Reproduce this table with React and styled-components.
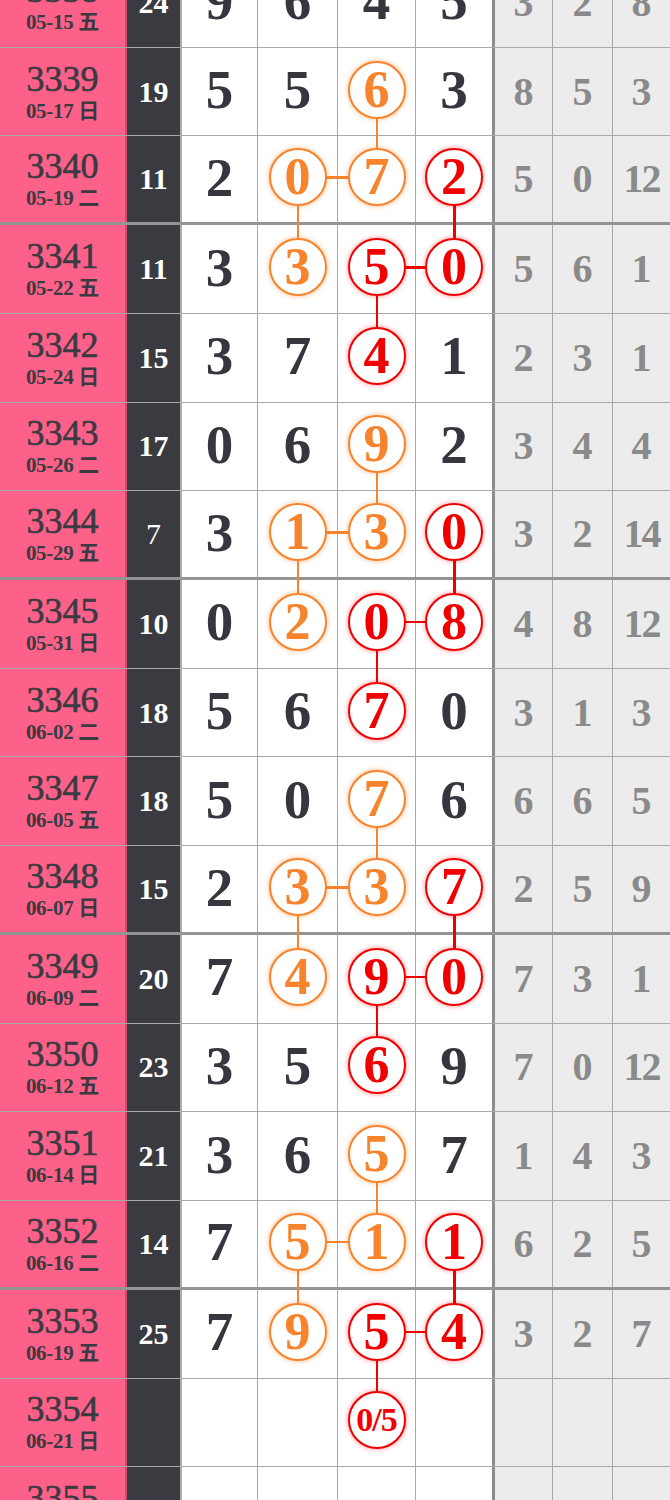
import React from 'react';
import styled, { createGlobalStyle } from 'styled-components';

const COLORS = {
  o: { line: '#f7842c', glow: 'rgba(247,132,44,0.4)' },
  r: { line: '#f00000', glow: 'rgba(240,0,0,0.32)' },
};

const Global = createGlobalStyle`
  html, body { margin: 0; padding: 0; background: #ffffff; overflow: hidden; }
  body { font-family: "Liberation Serif", "Noto Sans CJK SC", serif; }
`;

const Board = styled.div`
  width: 670px;
  margin-top: -41px;
`;

const Row = styled.div`
  display: grid;
  grid-template-columns: 127px 55px 76px 80px 78px 79px 58px 60px 57px;
  height: 88.73px;
  box-sizing: border-box;
  border-bottom: ${(p) => (p.$thick ? '3px solid rgba(0,0,0,0.42)' : '1px solid rgba(0,0,0,0.34)')};
`;

const IssueCell = styled.div`
  background: #fd6189;
  border-right: 2px solid rgba(0, 0, 0, 0.2);
  box-sizing: border-box;
  display: flex;
  flex-direction: column;
  align-items: center;
  justify-content: center;
  color: #3a3a41;
`;

const IssueNo = styled.div`
  font-size: 36px;
  line-height: 38px;
  font-weight: 400;
  -webkit-text-stroke: 0.6px currentColor;
`;

const IssueDate = styled.div`
  font-family: "Liberation Serif", "Noto Sans CJK SC", serif;
  font-size: 21px;
  line-height: 26px;
  font-weight: 700;
  letter-spacing: -0.3px;
  white-space: nowrap;
`;

const SumCell = styled.div`
  background: #3a3a41;
  border-right: 2px solid #adadad;
  box-sizing: border-box;
  color: #ffffff;
  font-size: 30px;
  font-weight: ${(p) => (p.$single ? 400 : 700)};
  display: flex;
  align-items: center;
  justify-content: center;
  line-height: 1;
`;

const DigitCell = styled.div`
  position: relative;
  background: #ffffff;
  box-sizing: border-box;
  border-right: ${(p) => (p.$last ? '3px solid rgba(0,0,0,0.45)' : '1px solid rgba(0,0,0,0.34)')};
  display: flex;
  align-items: center;
  justify-content: center;
`;

const Plain = styled.span`
  font-size: 55px;
  font-weight: 700;
  line-height: 1;
  color: #36363e;
  margin-bottom: 4px;
`;

const Ball = styled.div`
  position: relative;
  z-index: 1;
  width: 58px;
  height: 58px;
  box-sizing: border-box;
  border-radius: 50%;
  border: 2.5px solid ${(p) => COLORS[p.$c].line};
  background: #ffffff;
  color: ${(p) => COLORS[p.$c].line};
  box-shadow: 0 0 4px 1px ${(p) => COLORS[p.$c].glow};
  display: flex;
  align-items: center;
  justify-content: center;
  font-size: ${(p) => (p.$small ? '34px' : '52px')};
  letter-spacing: ${(p) => (p.$small ? '-1px' : '0')};
  font-weight: 700;
  line-height: 1;
  margin-bottom: 4px;
`;

const Link = styled.span`
  position: absolute;
  background: ${(p) => COLORS[p.$c].line};
  ${(p) =>
    p.$dir === 'up'
      ? 'left: calc(50% - 1px); width: 2.5px; top: 0; height: calc(50% - 2px);'
      : p.$dir === 'down'
      ? 'left: calc(50% - 1px); width: 2.5px; top: calc(50% - 2px); bottom: -3px;'
      : p.$dir === 'left'
      ? 'top: calc(50% - 3px); height: 2.5px; left: 0; width: 50%;'
      : 'top: calc(50% - 3px); height: 2.5px; left: 50%; right: -3px;'}
`;

const GrayCell = styled.div`
  background: #ececec;
  box-sizing: border-box;
  border-right: ${(p) => (p.$last ? 'none' : '1px solid rgba(0,0,0,0.3)')};
  display: flex;
  align-items: center;
  justify-content: center;
  color: #8a8a8a;
  font-size: 40px;
  font-weight: 700;
  line-height: 1;
  letter-spacing: ${(p) => (p.$wide ? '-2px' : '0')};
`;

const o = (v) => ({ v, c: 'o' });
const r = (v) => ({ v, c: 'r' });

const rows = [
  { no: '3338', date: '05-15 五', sum: 24, d: [9, 6, 4, 5], g: [3, 2, 8] },
  { no: '3339', date: '05-17 日', sum: 19, d: [5, 5, o(6), 3], g: [8, 5, 3] },
  { no: '3340', date: '05-19 二', sum: 11, d: [2, o(0), o(7), r(2)], g: [5, 0, 12] },
  { no: '3341', date: '05-22 五', sum: 11, d: [3, o(3), r(5), r(0)], g: [5, 6, 1] },
  { no: '3342', date: '05-24 日', sum: 15, d: [3, 7, r(4), 1], g: [2, 3, 1] },
  { no: '3343', date: '05-26 二', sum: 17, d: [0, 6, o(9), 2], g: [3, 4, 4] },
  { no: '3344', date: '05-29 五', sum: 7, d: [3, o(1), o(3), r(0)], g: [3, 2, 14] },
  { no: '3345', date: '05-31 日', sum: 10, d: [0, o(2), r(0), r(8)], g: [4, 8, 12] },
  { no: '3346', date: '06-02 二', sum: 18, d: [5, 6, r(7), 0], g: [3, 1, 3] },
  { no: '3347', date: '06-05 五', sum: 18, d: [5, 0, o(7), 6], g: [6, 6, 5] },
  { no: '3348', date: '06-07 日', sum: 15, d: [2, o(3), o(3), r(7)], g: [2, 5, 9] },
  { no: '3349', date: '06-09 二', sum: 20, d: [7, o(4), r(9), r(0)], g: [7, 3, 1] },
  { no: '3350', date: '06-12 五', sum: 23, d: [3, 5, r(6), 9], g: [7, 0, 12] },
  { no: '3351', date: '06-14 日', sum: 21, d: [3, 6, o(5), 7], g: [1, 4, 3] },
  { no: '3352', date: '06-16 二', sum: 14, d: [7, o(5), o(1), r(1)], g: [6, 2, 5] },
  { no: '3353', date: '06-19 五', sum: 25, d: [7, o(9), r(5), r(4)], g: [3, 2, 7] },
  { no: '3354', date: '06-21 日', sum: '', d: ['', '', r('0/5'), ''], g: ['', '', ''] },
  { no: '3355', date: '06-23 二', sum: '', d: ['', '', '', ''], g: ['', '', ''] },
];

const colorAt = (ri, ci) => {
  const row = rows[ri];
  if (!row) return null;
  const cell = row.d[ci];
  return cell && typeof cell === 'object' ? cell.c : null;
};

function Digit({ ri, ci }) {
  const cell = rows[ri].d[ci];
  if (cell && typeof cell === 'object') {
    const c = cell.c;
    const links = [];
    if (colorAt(ri - 1, ci) === c) links.push('up');
    if (colorAt(ri + 1, ci) === c) links.push('down');
    if (colorAt(ri, ci - 1) === c) links.push('left');
    if (colorAt(ri, ci + 1) === c) links.push('right');
    return (
      <DigitCell $last={ci === 3}>
        {links.map((dir) => (
          <Link key={dir} $dir={dir} $c={c} />
        ))}
        <Ball $c={c} $small={String(cell.v).length > 1}>
          {cell.v}
        </Ball>
      </DigitCell>
    );
  }
  return (
    <DigitCell $last={ci === 3}>
      <Plain>{cell}</Plain>
    </DigitCell>
  );
}

export default function App() {
  return (
    <>
      <Global />
      <Board>
        {rows.map((row, ri) => (
          <Row key={row.no} $thick={(Number(row.no) - 3336) % 4 === 0}>
            <IssueCell>
              <IssueNo>{row.no}</IssueNo>
              <IssueDate>{row.date}</IssueDate>
            </IssueCell>
            <SumCell $single={String(row.sum).length === 1}>{row.sum}</SumCell>
            {row.d.map((_, ci) => (
              <Digit key={ci} ri={ri} ci={ci} />
            ))}
            {row.g.map((v, gi) => (
              <GrayCell key={gi} $last={gi === 2} $wide={String(v).length > 1}>
                {v}
              </GrayCell>
            ))}
          </Row>
        ))}
      </Board>
    </>
  );
}
